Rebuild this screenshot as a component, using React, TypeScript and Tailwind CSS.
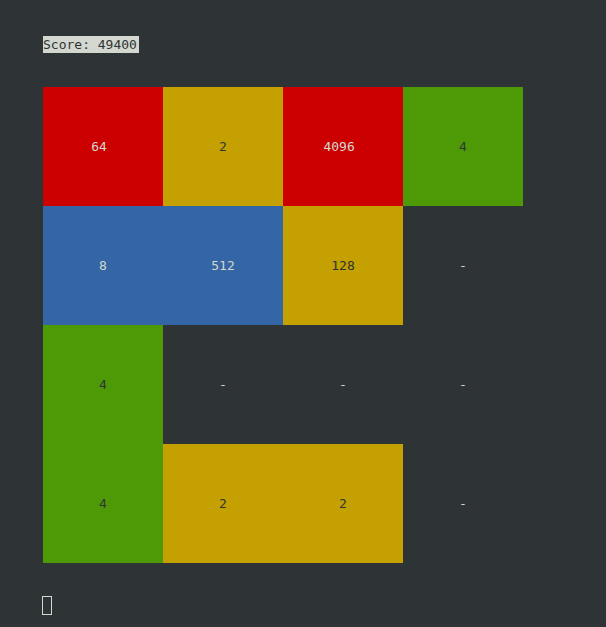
type Tile = { value: string; style: string };

const red = "bg-[#cc0000] text-[#d3d7cf]";
const yellow = "bg-[#c4a000] text-[#2e3436]";
const green = "bg-[#4e9a06] text-[#2e3436]";
const blue = "bg-[#3465a4] text-[#d3d7cf]";
const empty = "text-[#d3d7cf]";

const rows: Tile[][] = [
  [
    { value: "64", style: red },
    { value: "2", style: yellow },
    { value: "4096", style: red },
    { value: "4", style: green },
  ],
  [
    { value: "8", style: blue },
    { value: "512", style: blue },
    { value: "128", style: yellow },
    { value: "-", style: empty },
  ],
  [
    { value: "4", style: green },
    { value: "-", style: empty },
    { value: "-", style: empty },
    { value: "-", style: empty },
  ],
  [
    { value: "4", style: green },
    { value: "2", style: yellow },
    { value: "2", style: yellow },
    { value: "-", style: empty },
  ],
];

// A tile is fifteen characters wide, so an even-length number gets its
// spare column on the right.
function pad(value: string) {
  return value.length % 2 === 0 ? `${value} ` : value;
}

export default function App() {
  return (
    <main className="flex min-h-screen flex-col items-start bg-[#2e3436] px-[43px] pt-9 font-['DejaVu_Sans_Mono',monospace] text-[13px] leading-[17px] text-[#d3d7cf]">
      <p className="min-w-24 bg-[#d3d7cf] text-[#2e3436]">Score: 49400</p>
      <div className="mt-[34px] grid w-full max-w-[480px] grid-cols-4">
        {rows.flatMap((row, y) =>
          row.map((tile, x) => (
            <div
              key={`${y}-${x}`}
              className={`flex h-[119px] items-center justify-center whitespace-pre ${tile.style}`}
            >
              {pad(tile.value)}
            </div>
          )),
        )}
      </div>
      <span className="mt-[33px] -ml-px h-[19px] w-[10px] border border-[#d3d7cf]" />
    </main>
  );
}
